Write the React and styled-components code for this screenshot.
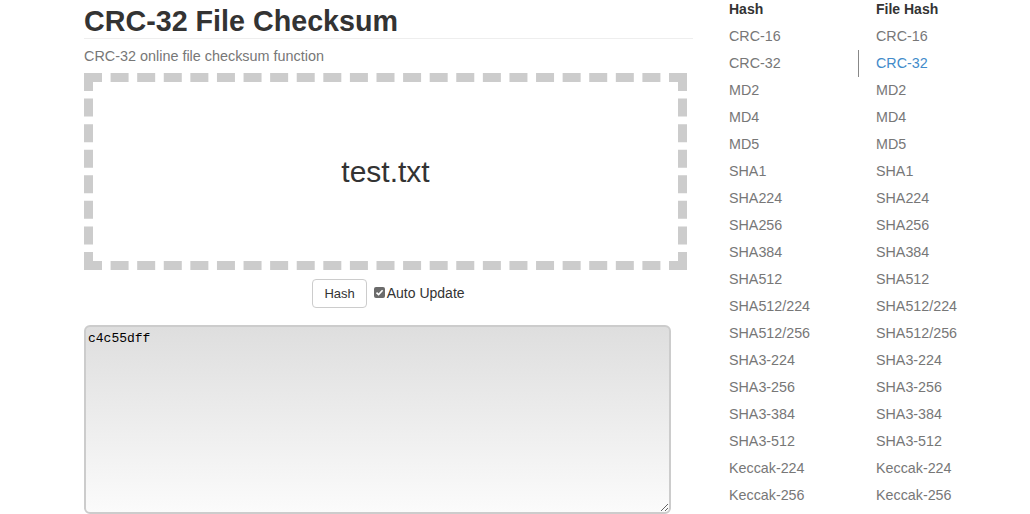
import React from "react";
import styled, { createGlobalStyle } from "styled-components";

const Global = createGlobalStyle`
  html, body { margin: 0; padding: 0; background: #fff; }
  body { font-family: "Liberation Sans", Arial, sans-serif; color: #333; font-size: 14px; }
`;

const Page = styled.div`
  display: flex;
  align-items: flex-start;
  padding-left: 84px;
  width: 1030px;
  height: 514px;
  box-sizing: border-box;
  overflow: hidden;
`;

const Main = styled.main`
  width: 609px;
  display: flex;
  flex-direction: column;
`;

const Title = styled.h1`
  margin: 5px 0 0;
  padding-bottom: 1px;
  font-size: 28.7px;
  line-height: 32px;
  font-weight: bold;
  color: #333;
  border-bottom: 1px solid #eee;
`;

const Subtitle = styled.p`
  margin: 7px 0 0;
  font-size: 14.4px;
  line-height: 20px;
  color: #777;
`;

const DropZone = styled.div`
  margin-top: 7px;
  width: 603px;
  height: 197px;
  box-sizing: border-box;
  border: 9px dashed #ccc;
  display: flex;
  align-items: center;
  justify-content: center;
  font-size: 30px;
  color: #333;
`;

const Controls = styled.div`
  margin-top: 9px;
  display: flex;
  justify-content: center;
  align-items: center;
  gap: 7px;
`;

const Button = styled.button`
  height: 29px;
  padding: 0 11px;
  background: #fff;
  border: 1px solid #ccc;
  border-radius: 4px;
  font-family: "Liberation Sans", Arial, sans-serif;
  font-size: 13px;
  color: #333;
`;

const CheckLabel = styled.label`
  display: flex;
  align-items: center;
  font-size: 14px;
  color: #333;
  gap: 1px;
  margin-top: -2px;
`;

const CheckBox = styled.span`
  width: 11px;
  height: 11px;
  border-radius: 2px;
  background: #6b6b6b;
  display: inline-flex;
  align-items: center;
  justify-content: center;
  margin-right: 1px;
`;

const Output = styled.textarea`
  margin-top: 17px;
  width: 587px;
  height: 189px;
  box-sizing: border-box;
  border: 2px solid #ccc;
  border-radius: 6px;
  padding: 4px 2px;
  background: linear-gradient(to bottom, #dedede, #fbfbfb);
  font-family: "Liberation Mono", monospace;
  font-size: 13px;
  color: #000;
  resize: both;
  outline: none;
`;

const Sidebar = styled.aside`
  margin-left: 18px;
  display: flex;
`;

const Column = styled.nav`
  width: 147px;
  display: flex;
  flex-direction: column;
`;

const ColHead = styled.div`
  height: 23px;
  line-height: 18px;
  padding-left: 18px;
  font-weight: bold;
  font-size: 14px;
  color: #333;
`;

const Item = styled.a`
  display: block;
  height: 27px;
  line-height: 27px;
  padding-left: ${(p) => (p.$active ? "17px" : "18px")};
  border-left: ${(p) => (p.$active ? "1px solid #888" : "none")};
  font-size: 14.3px;
  color: ${(p) => (p.$active ? "#428bca" : "#777")};
  text-decoration: none;
`;

const hashes = [
  "CRC-16", "CRC-32", "MD2", "MD4", "MD5", "SHA1", "SHA224", "SHA256",
  "SHA384", "SHA512", "SHA512/224", "SHA512/256", "SHA3-224", "SHA3-256",
  "SHA3-384", "SHA3-512", "Keccak-224", "Keccak-256",
];

export default function App() {
  return (
    <>
      <Global />
      <Page>
        <Main>
          <Title>CRC-32 File Checksum</Title>
          <Subtitle>CRC-32 online file checksum function</Subtitle>
          <DropZone>test.txt</DropZone>
          <Controls>
            <Button>Hash</Button>
            <CheckLabel>
              <CheckBox>
                <svg width="9" height="9" viewBox="0 0 9 9">
                  <path d="M1.5 4.6 L3.6 6.6 L7.6 2.2" fill="none" stroke="#fff" strokeWidth="1.6" />
                </svg>
              </CheckBox>
              Auto Update
            </CheckLabel>
          </Controls>
          <Output defaultValue="c4c55dff" spellCheck={false} />
        </Main>
        <Sidebar>
          <Column>
            <ColHead>Hash</ColHead>
            {hashes.map((h) => (
              <Item key={h} href="#">{h}</Item>
            ))}
          </Column>
          <Column>
            <ColHead>File Hash</ColHead>
            {hashes.map((h) => (
              <Item key={h} href="#" $active={h === "CRC-32"}>{h}</Item>
            ))}
          </Column>
        </Sidebar>
      </Page>
    </>
  );
}
